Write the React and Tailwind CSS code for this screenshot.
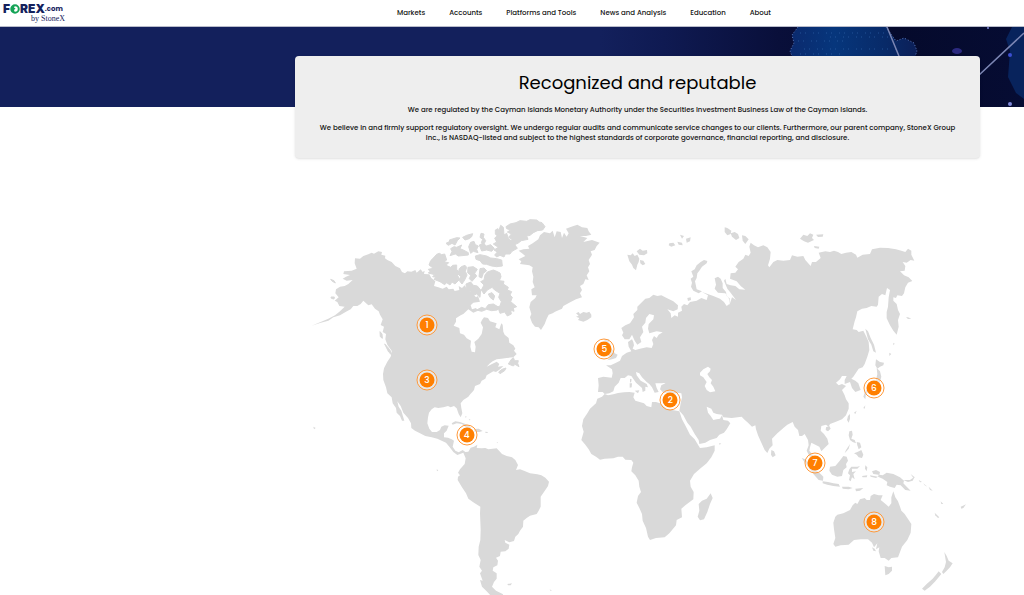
const navItems = ["Markets", "Accounts", "Platforms and Tools", "News and Analysis", "Education", "About"];

const MAP_W = 2055;
const MAP_H = 1155;

// Map positions, in map units, of the numbered offices.
const offices = [
  { id: 1, x: 396, y: 346, place: "Canada" },
  { id: 2, x: 1126, y: 570, place: "Cyprus" },
  { id: 3, x: 396, y: 511, place: "United States" },
  { id: 4, x: 515, y: 676, place: "Cayman Islands" },
  { id: 5, x: 928, y: 417, place: "United Kingdom" },
  { id: 6, x: 1737, y: 534, place: "Japan" },
  { id: 7, x: 1560, y: 759, place: "Singapore" },
  { id: 8, x: 1737, y: 936, place: "Australia" },
];

// Shifts a list of "x,y" pairs from its region's origin into map units.
const at = (dx, dy, list) =>
  list
    .trim()
    .split(/\s+/)
    .map((pair) => {
      const [x, y] = pair.split(",").map(Number);
      return `${x + dx + 15},${y + dy}`;
    })
    .join(" ");

const arctic = [
  "387,165 392,152 402,142 410,133 418,130 425,134 434,132 440,150 432,156 446,158 438,166 452,172 458,166 470,165 470,178 475,185 472,195 479,208 465,222 456,216 450,225 440,218 434,224 420,215 402,208 408,202 398,200 404,194 385,189 390,184 385,178 400,175",
  "438,100 450,94 448,90 470,83 480,84 472,92 465,105 456,100 445,106",
  "452,116 462,110 470,112 485,105 480,116 490,120 505,128 505,135 475,138 466,132 450,137 456,124",
  "488,82 500,76 518,71 515,80 508,86 495,90",
  "506,110 512,97 522,94 526,104 535,108 530,118 534,128 520,124 512,130",
  "543,70 552,72 550,82 557,92 552,102 544,98 548,88 540,82",
  "538,105 548,100 560,108 572,104 583,115 575,124 560,120 545,123",
  "526,138 540,134 560,138 572,144 590,146 605,150 607,168 590,170 575,168 560,163 548,162 540,152 528,148",
  "586,60 594,56 596,64 602,46 610,52 612,75 620,70 625,85 640,98 652,115 636,124 630,132 616,132 612,141 600,136 590,141 584,135 592,126 582,120 595,112 580,102 590,96 584,84 592,78 586,72",
  "618,50 630,42 648,38 660,32 680,34 690,29 710,30 718,36 726,38 735,50 728,60 712,62 700,68 690,76 680,78 684,88 664,92 655,99 640,106 630,95 636,88 626,82 634,72 622,66 632,60 620,56",
  "555,195 562,186 580,180 590,184 600,189 603,200 598,212 612,214 610,222 625,232 622,240 635,245 630,255 637,262 632,275 650,290 640,294 642,304 632,300 634,312 622,318 614,306 600,310 596,298 585,295 600,288 604,275 596,262 600,250 584,240 576,232 562,240 552,252 544,240 552,225 542,215 552,210",
  "478,176 484,170 495,166 500,172 496,184 501,195 494,210 486,222 478,212 482,200 474,192",
  "504,172 520,170 532,178 524,190 530,198 516,214 508,206 512,196 503,188",
  "540,176 552,174 560,182 550,190 545,204 537,200",
  "498,222 512,216 520,226 532,228 542,240 540,262 530,252 520,256 512,244 500,248",
  "530,300 545,292 556,296 565,284 580,282 597,292 592,300 575,302 560,298 545,304",
  "565,252 576,248 584,258 580,270 570,262",
  "625,462 634,448 640,443 644,452 655,452 653,460 657,470 645,463 640,468",
  "596,486 606,478 618,474 614,482 600,491",
  "254,402 262,410 272,424 276,436 266,426",
  "240,365 246,372 247,385 241,380",
  "92,208 102,212 106,219 97,214",
  "93,261 103,261 102,267 94,265",
];

const northAmerica =
  at(
    0,
    0,
    `165,145 180,146 190,138 205,133 215,128 222,131 235,124 246,126 244,134 256,137 255,145 262,150 275,156 286,168
     300,175 306,186 315,190 322,184 334,185 346,180 350,188 362,178 368,186 374,182 372,192 388,193 394,204 406,214 402,228
     415,232 428,236 440,230 446,238 460,236 464,243 478,240 476,228 486,234 494,226 502,240 516,248 528,262 534,258 540,275
     520,278 512,286 516,298 528,294 534,302 520,308 505,298 490,312 482,316 468,325 468,335 461,347 478,354 480,370 492,374 500,385 513,392
     511,410 515,425 525,427 527,410 523,396 535,386 545,372 549,352 542,338 546,330 552,322 564,324 570,334 590,340 586,352 598,358 604,340 608,344
     610,365 614,374 626,384 628,398 640,406 646,416 642,422 650,432 640,442 620,444 604,446 590,448 578,454 570,460 560,470 576,462
     590,455 598,462 594,470 610,468 600,478 588,486 580,484 560,496 556,506 545,512 540,522 525,528 522,540 512,552`,
  ) +
  " " +
  at(
    0,
    510,
    `516,36 505,50 490,60 482,70 484,84 487,100 482,112 476,102 470,85 462,78 452,82 444,78 430,82 415,84 404,82 395,88 387,98 384,112
     382,130 388,146 396,156 410,156 420,150 424,140 434,136 446,137 440,152 432,160 432,172 444,173 455,178 462,182 458,200
     466,212 476,217 488,210 496,216 505,215 512,203 522,200 532,194 530,204 545,205 556,204 565,208 578,206 590,205 600,215 606,222 620,228
     636,232 646,240 654,255 648,270 660,268 672,272 690,280 712,283 724,286 736,293 747,305 744,318 736,330 722,350 722,380
     716,392 710,402 690,407 680,414 670,422 669,440 660,452 655,462 646,470 642,483 628,487 614,480 616,488 628,494 626,506 616,514 602,515 600,528
     588,533 594,542 592,556 580,562 578,572 590,580 590,596 582,606 576,620 588,632 608,642 612,650 575,650 560,634 546,620 540,600 548,602
     540,580 546,572 538,560 542,540 535,525 536,500 541,480 542,450 540,400 541,380 522,368 505,356 498,340 485,320
     473,300 474,290 480,286 474,278 480,268 494,252 497,235 490,218 480,222 472,225 460,216 448,200 438,188 425,182 412,176 395,172 376,168 360,160 345,152 334,144
     333,130 324,114 310,98 302,78 292,64 296,80 304,92 308,106 313,122 306,122 300,108 290,98 288,84 278,70 275,52 262,40 258,22 250,0`,
  ) +
  " " +
  at(
    0,
    0,
    `249,492 252,475 262,455 272,440 276,424 262,404 256,388 258,372 248,366 252,350 242,345 248,328 240,314 236,304 225,296
     215,283 205,286 190,272 182,282 172,288 160,288 152,298 138,305 120,316 100,322 85,332 60,339 35,347 60,337 85,326 105,316 120,304 134,290 118,288
     112,276 104,272 116,262 106,250 108,238 120,230 134,228 145,222 158,210 140,212 128,206 138,200 150,195 130,192 132,184 155,182 170,176 164,160`,
  );

const greenland =
  "56,122 70,118 88,116 84,108 98,100 115,88 120,76 132,66 150,70 158,62 164,82 170,64 182,66 186,84 192,68 200,80 206,70 198,56 214,50 232,44 246,52 262,54 266,64 274,74 258,78 240,78 262,84 250,96 276,90 299,98 290,108 284,120 272,124 276,134 266,150 270,162 264,172 268,184 260,196 266,210 256,208 250,222 240,228 246,240 240,250 246,262 228,268 212,276 190,288 186,296 165,305 158,310 146,314 140,326 134,342 123,360 116,352 105,350 96,338 90,322 94,312 88,292 92,276 106,264 110,256 96,256 94,238 104,232 98,216 100,200 96,184 98,172 88,166 60,162 64,154 56,148 76,138 66,130";

const northAtlantic = [
  "228,310 236,306 240,312 250,306 260,308 268,305 274,314 274,322 262,330 250,335 234,330 238,324 228,320 236,317",
  "382,134 392,136 398,130 404,138 412,134 418,146 416,156 412,164 408,181 400,174 396,164 388,154",
  "410,124 420,116 428,122 441,120 442,130 432,136 418,134",
  "420,150 430,152 436,162 428,166 421,160",
  "508,100 520,98 526,106 514,110 506,106",
  "532,95 546,98 548,106 536,104",
  "540,74 552,78 546,86",
  "558,86 572,82 570,94 560,98",
  "612,150 622,153 620,160 606,170 598,182 592,190 590,204 585,214 588,228 590,238 606,244 596,250 580,242 573,230 576,218 572,206 580,200 574,184 584,178 590,166 602,156",
  "562,264 572,262 573,270 564,273",
  "312,388 328,388 326,398 332,402 330,412 340,422 344,430 353,434 348,444 336,448 322,451 332,442 322,436 328,428 320,420 318,404",
  "292,418 304,412 308,424 300,432 290,434",
  "390,506 395,508 393,518 390,516",
  "389,520 396,520 395,532 389,533",
  "404,542 418,541 414,550",
  "392,398 398,404 394,410 387,404",
];

const russianIslands = [
  "134,52 142,54 154,62 152,72 142,76 134,66",
  "152,70 164,66 174,72 178,84 168,90 156,80",
  "186,76 196,78 206,88 196,102 188,92",
  "360,86 370,74 382,78 390,70 400,74 396,84 402,90 384,98 372,94",
  "408,74 430,73 428,80 414,81",
  "402,108 418,110 416,116 404,114",
  "556,356 564,364 572,384 582,404 588,428 580,424 574,404 564,388",
  "588,448 600,456 612,458 610,466 600,470 592,476 586,466",
  "590,474 600,484 604,500 600,515 590,530 575,545 558,550 556,568 550,560 556,542 575,530 588,510 592,492",
  "678,322 684,322 694,326 684,327",
  "640,398 644,401 640,406",
  "628,428 634,432 628,438",
];

const eurasia = [
  at(
    600,
    0,
    `295,504 310,500 335,503 338,490 336,478 318,466 332,466 345,460 360,452 366,438 380,428 394,424 386,410 384,396 396,388
     400,396 402,406 398,416 406,420 420,416 440,412 455,414 460,402 456,390 462,378 470,384 476,374 488,367 470,364 448,370 444,356 446,342 460,328
     462,316 448,312 438,324 436,338 426,350 430,366 420,382 424,396 412,404 404,392 396,374 388,388 374,388 366,376 370,368 364,354 376,346 390,340 402,322 400,312
     412,300 412,290 424,278 436,266 448,264 460,254 472,258 484,256 500,264 520,274 534,286 533,298 520,304 502,298 512,310 514,324 524,316 534,320 534,308 546,302 544,290 552,282
     562,286 570,276 590,272 604,264 620,270 624,256 606,246 640,258 660,266 672,276 680,288 688,282 688,268 676,250`,
  ),
  at(
    1140,
    0,
    `114,248 104,236 108,224 104,205 114,200 122,206 128,220 128,234 138,246 140,258 150,266 148,286 156,262 168,270 150,246 142,236 132,212 136,206
     140,222 152,226 166,228 178,238 196,239 182,228 170,214 150,206 152,190 166,188 174,178 166,170 176,156 190,146 196,134 206,138 212,128
     208,110 212,98 222,106 234,112 250,106 262,112 272,126 270,146 264,166 268,172 280,156 292,150 310,152 330,150 336,136 352,140 370,138 376,150 392,168 396,156 408,156 422,144 416,128
     436,124 450,126 462,122 474,126 484,132 498,128 514,126 528,134 532,143 548,134 570,132 576,118 600,113 624,114 648,118 664,122 676,126
     684,116 694,122 694,134 703,152 692,150 680,158 668,156 676,168 674,182 660,184 672,196 686,202 697,213 684,218 676,232 672,250 666,258 652,256 648,264 640,262 640,272
     650,282 654,300 660,312 654,330 656,350 650,374 640,362 630,346 620,325 620,306 624,290 626,262 630,240 621,234 616,256 606,252 596,260 594,284 590,290 574,288 560,294 546,296
     532,304 528,322 524,334 518,358 530,360 536,366 550,362 558,378 566,396 568,420 562,440 554,462 548,472 536,476 524,494`,
  ),
  at(
    1350,
    450,
    `310,50 304,56 316,62 325,70 332,90 316,96 306,84 300,66 284,72 284,60 290,48 276,48 270,58 258,68 266,76 276,72 288,78 276,90 284,106 288,118 296,130 296,146
     288,166 276,178 256,186 240,192 236,200 228,194 214,198 212,212 222,222 232,236 236,252 226,262 214,274 208,260 196,254 184,248 180,262 178,272 186,282
     194,292 196,306 186,300 176,284 170,272 176,256 174,240 164,222 156,228 148,228 144,210 134,200 128,186 112,194 100,204 96,208 82,220 66,236
     68,256 58,266 52,279 44,270 32,244 24,226 18,208 16,196 6,200 -6,188`,
  ),
  at(
    750,
    450,
    `582,178 575,170 545,174 520,172 516,164 500,162 490,158 484,146 470,140 474,158 482,168 490,180 500,178 510,176 516,166 520,180 534,182 541,190
     530,208 522,218 508,224 500,234 480,240 466,248 448,252 446,240 434,222 422,200 412,188 400,166 388,152 392,130 396,112 394,100 380,98 366,104 350,98 340,98 330,88
     334,76 346,70 345,58 352,38 362,29 368,40 380,38 378,28 402,20 396,36 406,42 420,52 420,62 404,67 388,64 376,58 362,62 350,68 334,70 316,70 320,84 326,96 314,98 306,82 298,72
     290,66 276,52 268,40 258,36 260,46 272,62 290,72 294,82 286,80 286,92 278,96 276,84 258,68 244,48 234,46 224,54 212,54 206,68 194,80 190,94 178,100 164,102 158,96 144,96 146,76 144,54`,
  ),
].join(" ");

const africa =
  "388,154 380,152 366,150 350,146 330,130 318,126 306,126 304,142 290,138 282,130 256,122 250,112 254,98 238,96 222,97 204,99 190,103 174,106 164,102 156,110 142,116 138,130 120,146 112,160 100,178 96,198 101,215 94,240 106,254 116,268 124,282 138,290 150,299 164,296 190,295 204,290 218,290 226,299 244,300 250,308 246,322 244,334 256,346 266,362 268,380 273,396 264,408 260,428 268,444 276,462 278,482 288,504 294,530 300,540 318,534 344,532 358,520 378,496 380,480 396,472 394,446 406,436 430,418 431,396 422,380 420,362 432,342 450,326 470,310 484,292 494,272 494,256 470,262 450,264 444,254 434,238 420,224 408,200 396,178";

const southernIslands = [
  "482,400 488,414 480,432 472,456 462,478 450,481 443,470 448,452 446,432 456,422 470,416",
  "664,270 672,274 677,286 668,292 663,284",
  "508,249 514,251 508,254",
];

const pacific = [
  "228,202 238,198 242,206 234,214 227,210",
  "294,168 300,162 300,176 296,188 291,180",
  "298,214 306,212 308,224 304,236 314,240 318,250 308,246 300,240 296,226",
  "320,246 330,248 334,262 326,268 322,256",
  "312,280 322,276 334,270 340,284 336,294 326,292 320,284",
  "300,252 296,266 284,280 288,270",
  "240,320 256,318 268,304 280,288 290,290 294,302 288,312 290,322 280,330 276,348 262,350 246,344 238,332",
  "155,294 166,298 182,316 200,332 212,342 220,350 219,362 206,360 192,344 178,326 166,310",
  "218,364 234,366 250,370 266,372 270,380 250,378 232,374 218,370",
  "276,380 296,380 308,384 296,388 278,386",
  "316,386 340,384 330,392 318,394",
  "298,328 304,320 322,320 330,318 322,326 306,326 306,336 318,334 310,342 314,358 306,352 302,364 297,360 300,346 294,340",
  "346,316 352,322 350,334 345,326",
  "336,348 352,346 350,352 338,352",
  "360,346 384,350 378,354 362,350",
  "366,334 378,330 390,336 388,344 398,346 410,338 430,342 450,352 462,362 460,370 470,380 482,392 466,390 452,376 440,374 434,384 420,380 410,376 412,366 398,356 384,350 386,344 370,342",
  "460,360 480,360 494,350 488,362 474,366",
  "482,342 494,352 490,354",
  "506,360 516,366 510,367",
  "520,370 532,380 524,376",
  "536,380 548,392 540,390",
  "554,458 568,472 564,474 556,466",
  "572,424 580,432 574,432",
  "632,440 642,436 648,433 640,444 634,446",
  "430,394 436,412 444,424 450,440 454,452 464,462 472,474 484,492 482,518 472,540 456,560 444,592 424,594 416,602 404,594 392,594 386,574 388,562 378,568 382,550 372,562 366,548 354,538 332,538 312,540 296,554 272,556 256,560 250,552 256,534 252,508 250,488 256,470 262,464 280,460 300,450 308,436 316,428 322,432 330,418 344,414 350,420 360,420 362,408 372,402 386,406 398,406 392,420 404,430 416,440 424,430 424,412",
  "404,618 416,622 426,620 426,632 416,642 406,646 405,632",
  "583,576 590,588 596,602 608,610 600,622 590,632 580,642 576,636 584,622 588,606",
  "566,634 574,642 566,652 556,664 540,680 524,692 516,686 530,672 548,656 558,644",
  "366,562 374,566 378,574 370,572",
  "312,158 320,152 316,162",
  "340,144 346,136 344,146",
];

const caribbean = [
  "455,130 466,124 480,126 496,132 508,138 515,144 500,144 486,132 470,130 458,134",
  "522,147 536,146 548,153 538,156 524,156",
  "556,155 564,156 562,159 556,158",
  "496,108 500,110 497,114",
  "506,116 512,120 508,121",
  "40,140 47,144 42,148",
  "410,268 415,271 411,274",
  "622,612 636,610 632,616 624,616",
  "749,628 756,632 751,632",
  "590,186 593,186 592,190",
];

const caspian = "450,38 460,28 474,20 482,26 480,34 472,42 478,52 486,60 482,70 490,80 496,94 480,97 470,90 464,78 470,66 460,52 450,46";

function WorldMap() {
  return (
    <svg viewBox={`0 0 ${MAP_W} ${MAP_H}`} className="block w-full fill-[#d9d9d9]" role="img" aria-label="World map">
      <g stroke="#d9d9d9" strokeWidth="3" strokeLinejoin="round">
        {arctic.map((p) => <polygon key={p} points={at(0, 0, p)} />)}
      </g>
      <polygon points={northAmerica} />
      <polygon points={at(600, 0, greenland)} />
      {northAtlantic.map((p) => <polygon key={p} points={at(600, 0, p)} />)}
      {russianIslands.map((p) => <polygon key={p} points={at(1140, 0, p)} />)}
      <polygon points={eurasia} />
      <polygon points={at(750, 450, africa)} />
      {southernIslands.map((p) => <polygon key={p} points={at(750, 450, p)} />)}
      {pacific.map((p) => <polygon key={p} points={at(1350, 450, p)} />)}
      {caribbean.map((p) => <polygon key={p} points={at(0, 510, p)} />)}
      <polygon points={at(750, 450, caspian)} className="fill-white" />
    </svg>
  );
}

function Logo() {
  return (
    <a href="#" aria-label="FOREX.com by StoneX" className="flex w-[62px] flex-col text-[#14215c]">
      <span className="flex items-center font-[Inter,sans-serif] text-[12px] leading-[11px] font-black">
        F
        <svg viewBox="0 0 20 20" className="size-[10px]" aria-hidden="true">
          <circle cx="10" cy="10" r="7.5" fill="none" stroke="#14a356" strokeWidth="4" />
          <path d="M10 2 L8 7 L11 9 L8 12 L10 18 L3 15 L2 6Z" fill="#14a356" />
        </svg>
        REX<span className="font-[Poppins,Inter,sans-serif] text-[7px] font-bold">.com</span>
      </span>
      <span className="self-end font-['Liberation_Serif',serif] text-[8px] leading-[9px] whitespace-nowrap">by StoneX</span>
    </a>
  );
}

function HeroArt() {
  return (
    <svg viewBox="0 0 424 80" preserveAspectRatio="xMaxYMid slice" className="ml-auto block h-20 w-[424px]" aria-hidden="true">
      <defs>
        <linearGradient id="fade" x1="0" x2="1">
          <stop offset="0" stopColor="#13205c" />
          <stop offset="0.15" stopColor="#0f1a52" />
          <stop offset="0.42" stopColor="#090f3a" />
          <stop offset="0.7" stopColor="#050a2c" />
          <stop offset="1" stopColor="#060c33" />
        </linearGradient>
        <linearGradient id="land" x1="0" x2="1">
          <stop offset="0" stopColor="#0b2a6e" />
          <stop offset="0.35" stopColor="#06367c" />
          <stop offset="0.75" stopColor="#082a68" />
          <stop offset="1" stopColor="#0c1f58" />
        </linearGradient>
      </defs>
      <rect width="424" height="80" fill="url(#fade)" />
      <path d="M198 0 L192 8 L194 16 L190 24 L194 34 L314 34 L317 24 L314 16 L304 11 L296 14 L286 0Z" fill="url(#land)" />
      <path d="M198 0 L192 8 L194 16 L190 24 L194 34 M286 0 L296 14 L304 11 L314 16 L317 24 L314 32" fill="none" stroke="#5c78b8" strokeWidth="1" strokeDasharray="1 2" />
      <path d="M200 6 H284 M198 14 H250 M204 22 H300 M230 10 H290 M200 27 H240" stroke="#2f62a8" strokeWidth="1" strokeDasharray="1 4 1 7" opacity="0.7" />
      <path d="M412 0 L406 12 L410 24 L408 50 L416 66 L424 72 V0Z" fill="#08235c" />
      <path d="M287 0 L301 34 M424 6 L378 49" stroke="#7c86b4" strokeWidth="1.5" />
      <ellipse cx="357" cy="24" rx="5" ry="3" fill="#2c2a80" />
      <circle cx="410" cy="28" r="2" fill="#3b4fd0" />
      <circle cx="410" cy="77" r="2" fill="#7f88d8" />
      <circle cx="388" cy="1" r="1" fill="#7f88d8" />
    </svg>
  );
}

export default function App() {
  return (
    <div className="min-h-screen overflow-hidden bg-white font-[Poppins,Inter,sans-serif] text-[#111]">
      <header className="flex h-[27px] items-center border-b border-[#b9bccb] px-[3px]">
        <Logo />
        <nav aria-label="Main" className="ml-[332px] flex gap-6 text-[7px] leading-[10px] font-medium">
          {navItems.map((item) => (
            <a key={item} href="#" className="whitespace-nowrap">{item}</a>
          ))}
        </nav>
      </header>
      <div className="h-20 bg-[#13205c]">
        <HeroArt />
      </div>
      <main className="pr-11 pl-[295px]">
        <section className="relative -mt-[51px] rounded bg-[#eeeeee] px-6 pt-3 pb-[15px] text-center shadow-sm">
          <h1 className="text-[18px] leading-[30px] text-black">Recognized and reputable</h1>
          <div className="mt-[7px] flex flex-col gap-2 text-[7px] leading-[10px] font-medium">
            <p>We are regulated by the Cayman Islands Monetary Authority under the Securities Investment Business Law of the Cayman Islands.</p>
            <p>We believe in and firmly support regulatory oversight. We undergo regular audits and communicate service changes to our clients. Furthermore, our parent company, StoneX Group Inc., is NASDAQ-listed and subject to the highest standards of corporate governance, financial reporting, and disclosure.</p>
          </div>
        </section>
        <section aria-label="Offices" className="relative mt-[52px]">
          <WorldMap />
          {offices.map((o) => (
            <button
              key={o.id}
              type="button"
              aria-label={`${o.id} ${o.place}`}
              className="absolute flex size-[21px] -translate-1/2 items-center justify-center rounded-full border border-[#ff9a3c] bg-white/40"
              style={{ left: `${(o.x / MAP_W) * 100}%`, top: `${(o.y / MAP_H) * 100}%` }}
            >
              <span className="flex size-[15px] items-center justify-center rounded-full bg-[#ff7f00] text-[9px] leading-none font-medium text-white">{o.id}</span>
            </button>
          ))}
        </section>
      </main>
    </div>
  );
}
